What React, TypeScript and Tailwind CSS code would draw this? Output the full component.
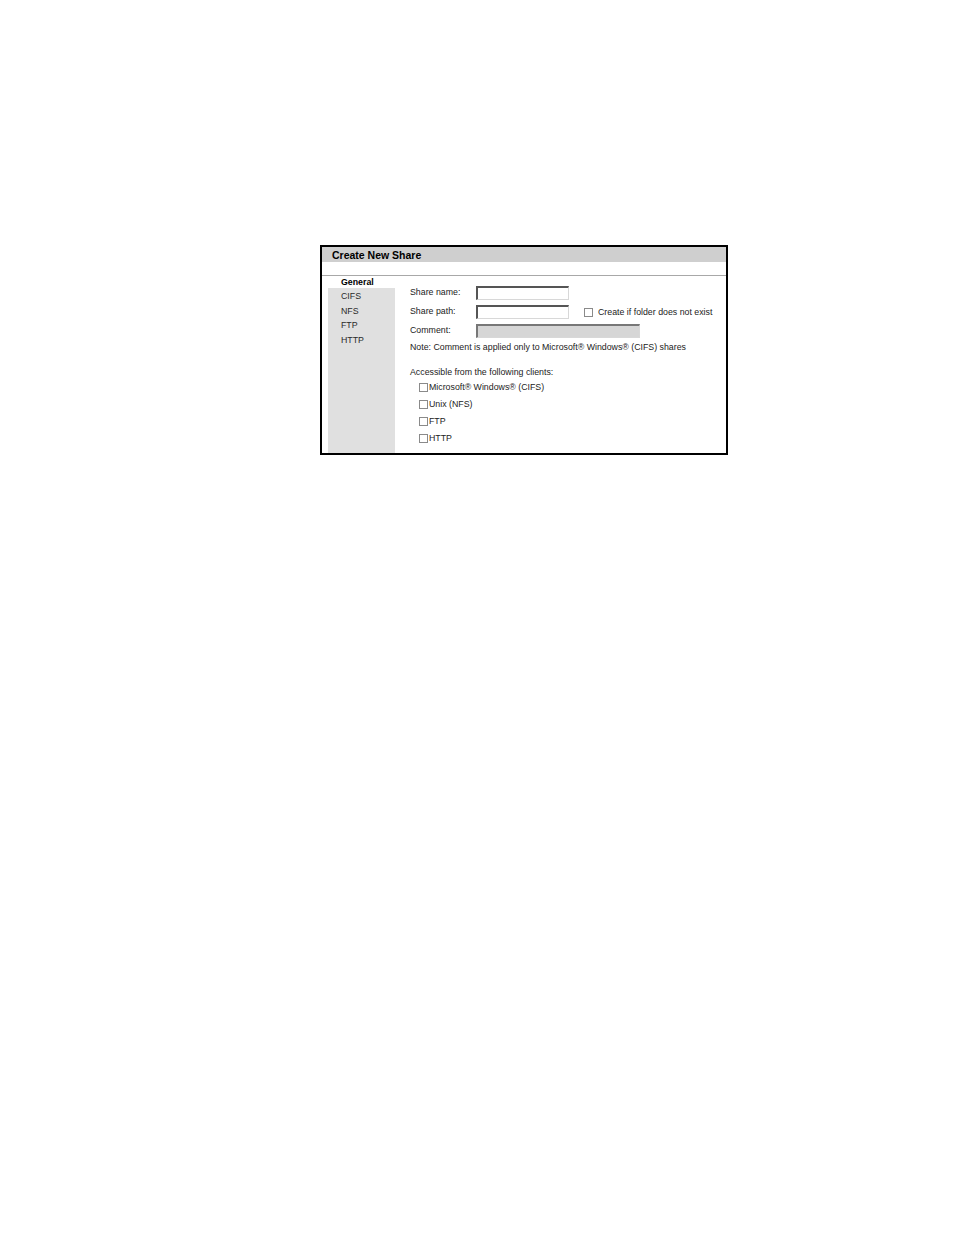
import React from 'react';

const font = { fontFamily: '"Liberation Sans", Arial, sans-serif' };

const tabs = ['CIFS', 'NFS', 'FTP', 'HTTP'];
const clients = ['Microsoft® Windows® (CIFS)', 'Unix (NFS)', 'FTP', 'HTTP'];

const Box: React.FC = () => (
  <span className="inline-block w-[9px] h-[9px] border border-[#8a8a8a] bg-white shrink-0" />
);

const Field: React.FC<{ gray?: boolean; wide?: boolean }> = ({ gray, wide }) => (
  <div
    className={`h-[14px] border-t-2 border-l-2 border-b border-r border-b-[#d8d8d8] border-r-[#d8d8d8] ${
      wide ? 'w-[164px]' : 'w-[93px]'
    } ${gray ? 'bg-[#d6d6d6] border-t-[#777] border-l-[#777]' : 'bg-white border-t-[#555] border-l-[#555]'}`}
  />
);

const App: React.FC = () => {
  return (
    <div className="min-h-[1235px] bg-white pt-[245px] pl-[320px]" style={font}>
      <div className="w-[408px] h-[210px] border-2 border-black flex flex-col text-[8.8px] text-[#222]">
        <div className="h-[15px] bg-[#cfcfcf] flex items-center pl-[10px] pt-[2px] text-[10.5px] font-bold text-black">
          Create New Share
        </div>
        <div className="h-[13px]" />
        <div className="flex flex-1 pl-[6px] border-t border-[#a8a8a8]">
          <div className="w-[67px] flex flex-col">
            <div className="h-[12px] bg-white pl-[13px] font-bold text-black leading-[12px]">General</div>
            <div className="flex-1 bg-[#e0e0e0] pl-[13px] pt-[3px] flex flex-col gap-[3px]">
              {tabs.map((t) => (
                <div key={t} className="leading-[11.5px] text-[#2a2a2a]">
                  {t}
                </div>
              ))}
            </div>
          </div>
          <div className="flex-1 pl-[15px] pt-[9px]">
            <div className="flex items-center h-[15px]">
              <span className="w-[66px]">Share name:</span>
              <Field />
            </div>
            <div className="flex items-center h-[15px] mt-[4px]">
              <span className="w-[66px]">Share path:</span>
              <Field />
              <span className="ml-[15px] mt-[2px] flex items-center gap-[5px]">
                <Box />
                <span>Create if folder does not exist</span>
              </span>
            </div>
            <div className="flex items-center h-[15px] mt-[4px]">
              <span className="w-[66px]">Comment:</span>
              <Field gray wide />
            </div>
            <div className="mt-[3px]">Note: Comment is applied only to Microsoft® Windows® (CIFS) shares</div>
            <div className="mt-[12px]">Accessible from the following clients:</div>
            <div className="pl-[9px] mt-[3px] flex flex-col gap-[6px]">
              {clients.map((c) => (
                <div key={c} className="flex items-center gap-[1px] h-[11px]">
                  <Box />
                  <span>{c}</span>
                </div>
              ))}
            </div>
          </div>
        </div>
      </div>
    </div>
  );
};

export default App;
